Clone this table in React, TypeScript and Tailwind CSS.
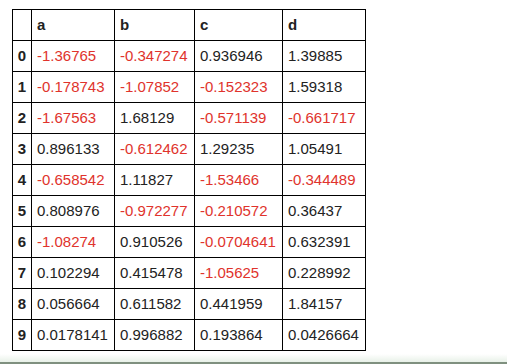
const cols = ['a', 'b', 'c', 'd']

const rows: string[][] = [
  ['-1.36765', '-0.347274', '0.936946', '1.39885'],
  ['-0.178743', '-1.07852', '-0.152323', '1.59318'],
  ['-1.67563', '1.68129', '-0.571139', '-0.661717'],
  ['0.896133', '-0.612462', '1.29235', '1.05491'],
  ['-0.658542', '1.11827', '-1.53466', '-0.344489'],
  ['0.808976', '-0.972277', '-0.210572', '0.36437'],
  ['-1.08274', '0.910526', '-0.0704641', '0.632391'],
  ['0.102294', '0.415478', '-1.05625', '0.228992'],
  ['0.056664', '0.611582', '0.441959', '1.84157'],
  ['0.0178141', '0.996882', '0.193864', '0.0426664'],
]

const widths = ['w-[83px]', 'w-[80px]', 'w-[88px]', 'w-[83px]']

export default function App() {
  return (
    <div className="h-[364px] w-[507px] flex flex-col bg-white font-['Liberation_Sans',Arial,sans-serif] text-[15px] text-[#222]">
      <div className="flex-1 pt-[9px] pl-[12px]">
        <table className="border-collapse table-fixed">
          <thead>
            <tr className="h-[31px]">
              <th className="w-[19px] border border-black p-0" />
              {cols.map((c, i) => (
                <th key={c} className={`${widths[i]} border border-black px-[5px] text-left font-bold`}>
                  {c}
                </th>
              ))}
            </tr>
          </thead>
          <tbody>
            {rows.map((r, ri) => (
              <tr key={ri} className="h-[31px]">
                <th className="border border-black p-0 text-center font-bold">{ri}</th>
                {r.map((v, ci) => (
                  <td
                    key={ci}
                    className={
                      v.startsWith('-')
                        ? 'border border-black px-[5px] whitespace-nowrap text-[#e0332c]'
                        : 'border border-black px-[5px] whitespace-nowrap'
                    }
                  >
                    {v}
                  </td>
                ))}
              </tr>
            ))}
          </tbody>
        </table>
      </div>
      <div className="h-[8px] bg-gradient-to-b from-white to-[#e8f1e8]" />
      <div className="h-[2px] bg-[#7f907f]" />
    </div>
  )
}
